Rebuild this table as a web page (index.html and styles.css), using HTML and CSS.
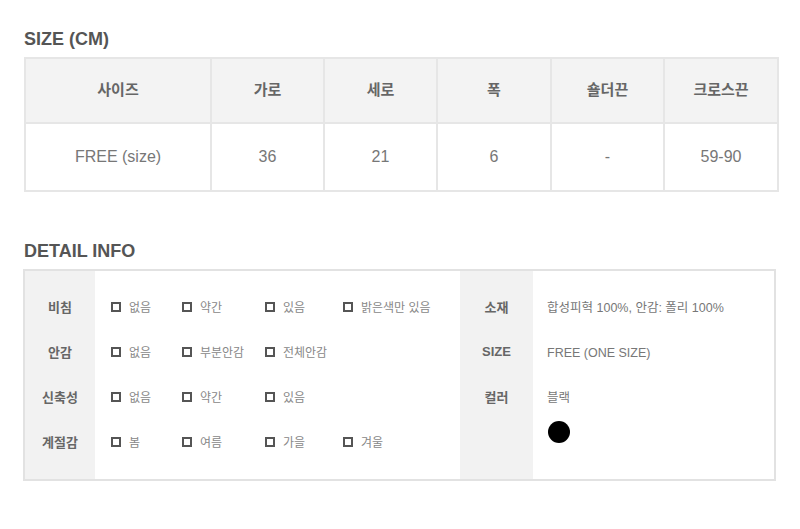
FILE: index.html
```html
<!DOCTYPE html>
<html lang="ko">
<head>
<meta charset="utf-8">
<link rel="stylesheet" href="styles.css">
</head>
<body>
<div class="page">
  <h2 class="title">SIZE (CM)</h2>
  <table class="size-table">
    <colgroup>
      <col class="c-first"><col class="c-113"><col class="c-113"><col class="c-114"><col class="c-113"><col class="c-114">
    </colgroup>
    <tr class="head">
      <th>사이즈</th><th>가로</th><th>세로</th><th>폭</th><th>숄더끈</th><th>크로스끈</th>
    </tr>
    <tr class="body">
      <td>FREE (size)</td><td>36</td><td>21</td><td>6</td><td>-</td><td>59-90</td>
    </tr>
  </table>

  <h2 class="title title-detail">DETAIL INFO</h2>
  <div class="detail">
    <div class="labels">
      <div class="label">비침</div>
      <div class="label">안감</div>
      <div class="label">신축성</div>
      <div class="label">계절감</div>
    </div>
    <div class="options">
      <div class="opt-row">
        <span class="opt"><i class="box"></i>없음</span>
        <span class="opt"><i class="box"></i>약간</span>
        <span class="opt"><i class="box"></i>있음</span>
        <span class="opt"><i class="box"></i>밝은색만 있음</span>
      </div>
      <div class="opt-row">
        <span class="opt"><i class="box"></i>없음</span>
        <span class="opt"><i class="box"></i>부분안감</span>
        <span class="opt"><i class="box"></i>전체안감</span>
      </div>
      <div class="opt-row">
        <span class="opt"><i class="box"></i>없음</span>
        <span class="opt"><i class="box"></i>약간</span>
        <span class="opt"><i class="box"></i>있음</span>
      </div>
      <div class="opt-row">
        <span class="opt"><i class="box"></i>봄</span>
        <span class="opt"><i class="box"></i>여름</span>
        <span class="opt"><i class="box"></i>가을</span>
        <span class="opt"><i class="box"></i>겨울</span>
      </div>
    </div>
    <div class="labels labels-right">
      <div class="label">소재</div>
      <div class="label label-en">SIZE</div>
      <div class="label">컬러</div>
    </div>
    <div class="values">
      <div class="value">합성피혁 100%, 안감: 폴리 100%</div>
      <div class="value">FREE (ONE SIZE)</div>
      <div class="value">블랙</div>
      <div class="swatch"></div>
    </div>
  </div>
</div>
</body>
</html>
```
FILE: styles.css
```css
html, body {
  margin: 0;
  padding: 0;
  background: #fff;
}
.page {
  padding: 28px 0 0 24px;
  font-family: "Liberation Sans", "Noto Sans CJK KR", sans-serif;
}
.title {
  margin: 0 0 7px 0;
  font-size: 18px;
  line-height: 22px;
  font-weight: bold;
  color: #555;
}
.title-detail {
  margin-top: 48px;
  margin-bottom: 7px;
}
.size-table {
  border-collapse: collapse;
  table-layout: fixed;
  width: 753px;
  border: 2px solid #e6e6e6;
}
.c-first { width: 186px; }
.c-113 { width: 113px; }
.c-114 { width: 114px; }
.size-table th,
.size-table td {
  border: 2px solid #e6e6e6;
  text-align: center;
  padding: 0;
}
.size-table .head th {
  height: 65px;
  padding-bottom: 4px;
  box-sizing: border-box;
  background: #f3f3f3;
  font-size: 15px;
  font-weight: bold;
  color: #666;
  font-family: "Noto Sans CJK KR", "Liberation Sans", sans-serif;
}
.size-table .body td {
  height: 65px;
  padding-bottom: 1px;
  font-size: 16px;
  color: #777;
}
.detail {
  display: grid;
  grid-template-columns: 70px 365px 73px 1fr;
  width: 753px;
  margin-left: -1px;
  border: 2px solid #e2e2e2;
  box-sizing: border-box;
  height: 212px;
}
.labels {
  background: #f2f2f2;
  padding-top: 13px;
}
.label {
  height: 45px;
  line-height: 45px;
  text-align: center;
  font-size: 13px;
  font-weight: bold;
  color: #666;
  font-family: "Noto Sans CJK KR", "Liberation Sans", sans-serif;
}
.label-en {
  font-family: "Liberation Sans", sans-serif;
}
.options {
  padding-top: 13px;
}
.opt-row {
  height: 45px;
  display: grid;
  grid-template-columns: 71px 83px 78px auto;
  align-items: center;
  padding-left: 16px;
}
.opt {
  display: flex;
  align-items: center;
  gap: 8px;
  font-size: 12px;
  color: #888;
  font-family: "Noto Sans CJK KR", "Liberation Sans", sans-serif;
  white-space: nowrap;
}
.box {
  display: block;
  width: 10px;
  height: 10px;
  box-sizing: border-box;
  border: 2px solid #555;
  background: #fff;
}
.values {
  padding: 15px 0 0 14px;
}
.value {
  height: 45px;
  line-height: 45px;
  font-size: 12.5px;
  color: #777;
}
.swatch {
  width: 22px;
  height: 22px;
  border-radius: 50%;
  background: #000;
  margin: 0 0 0 1px;
}
```
